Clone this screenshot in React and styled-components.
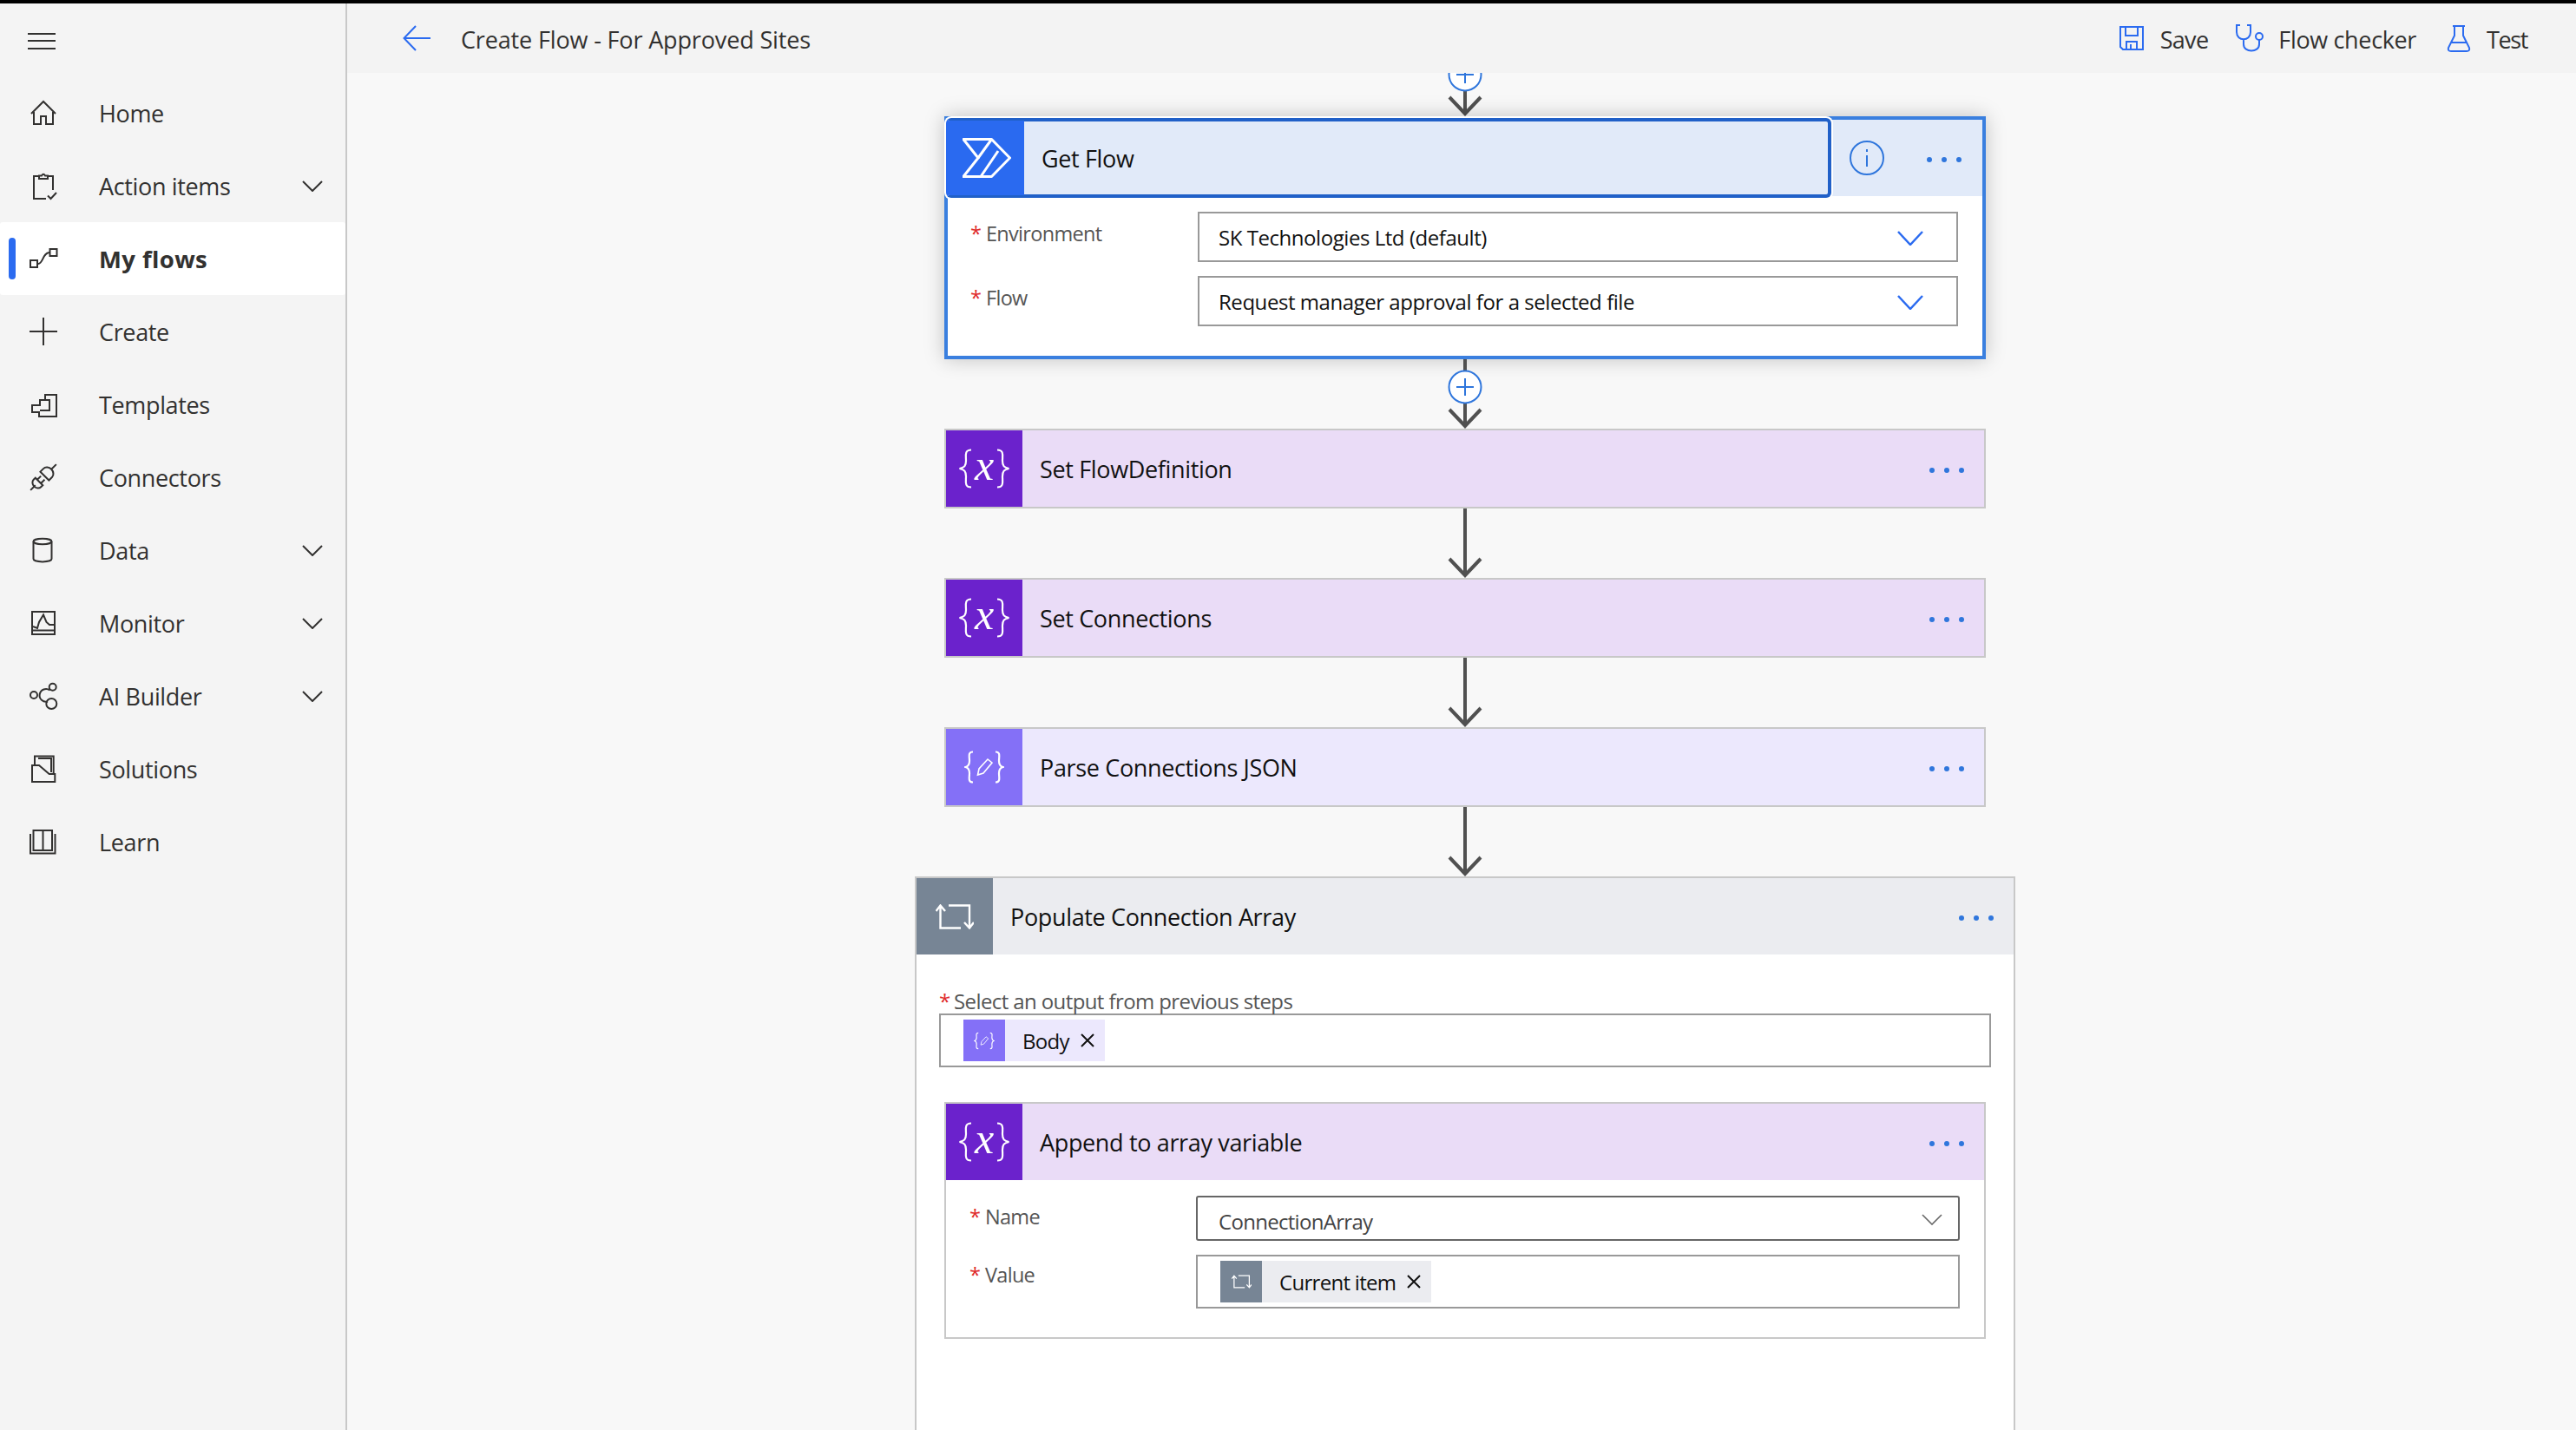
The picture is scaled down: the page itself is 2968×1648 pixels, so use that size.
import React from 'react';
import styled, { createGlobalStyle } from 'styled-components';

const Global = createGlobalStyle`
  html, body { margin: 0; padding: 0; height: 100%; overflow: hidden; }
  body { font-family: "Open Sans", "Noto Sans", sans-serif; color: #323130; }
  * { box-sizing: border-box; }
`;

const Shell = styled.div`
  display: grid;
  grid-template-columns: 400px 1fr;
  height: 1648px;
  border-top: 4px solid #000;
  background: #f8f8f8;
  overflow: hidden;
`;

const Sidebar = styled.nav`
  background: #f4f4f4;
  border-right: 2px solid #c8c8c8;
`;

const Burger = styled.div`
  height: 84px;
  padding: 34px 0 0 32px;
`;

const NavItem = styled.div`
  position: relative;
  display: flex;
  align-items: center;
  height: 84px;
  padding: 0 26px 0 34px;
  border-radius: 3px;
  background: ${p => (p.$active ? '#fff' : 'transparent')};
  font-size: ${p => (p.$active ? 27.5 : 27)}px;
  letter-spacing: ${p => (p.$active ? 0.4 : -0.35)}px;
  font-weight: ${p => (p.$active ? 700 : 400)};
  color: #323130;
`;

const ActiveBar = styled.span`
  position: absolute;
  left: 10px;
  top: 18px;
  width: 8px;
  height: 48px;
  border-radius: 4px;
  background: #2b6bf0;
`;

const NavLabel = styled.span`
  flex: 1;
  margin-left: 48px;
`;

const Main = styled.main`
  display: flex;
  flex-direction: column;
  min-width: 0;
  overflow: hidden;
`;

const Header = styled.header`
  flex: none;
  display: flex;
  align-items: center;
  height: 80px;
  padding: 0 56px 0 64px;
  background: #f3f3f3;
  font-size: 27px;
  z-index: 1;
`;

const Title = styled.div`
  flex: 1;
  margin: 3px 0 0 35px;
  letter-spacing: -0.15px;
`;

const Command = styled.div`
  display: flex;
  align-items: center;
  gap: ${p => p.$gap}px;
  margin-left: ${p => p.$left}px;
`;

const CommandLabel = styled.span`
  margin-top: 2px;
  letter-spacing: ${p => p.$spacing}px;
`;

const Canvas = styled.div`
  flex: 1;
  display: flex;
  flex-direction: column;
  align-items: center;
  padding-left: 8px;
  margin-top: -30px;
  overflow: hidden;
  clip-path: inset(30px 0 0 0);
`;

const StepCard = styled.section`
  flex: none;
  width: 1200px;
  background: #fff;
  border: ${p => (p.$selected ? '4px solid #3a7fdf' : '2px solid #c8c8c8')};
  box-shadow: ${p => (p.$selected ? '0 0 22px rgba(0,0,0,.22)' : 'none')};
`;

const LoopCard = styled.section`
  flex: none;
  width: 1268px;
  padding-bottom: 300px;
  background: #fff;
  border: 2px solid #c8c8c8;
`;

const StepHead = styled.div`
  display: flex;
  align-items: center;
  height: 88px;
  background: ${p => p.$tint};
  font-size: 27px;
  letter-spacing: -0.35px;
  color: #111;
`;

const IconTile = styled.div`
  flex: none;
  display: flex;
  align-items: center;
  justify-content: center;
  width: ${p => p.$size || 88}px;
  height: ${p => p.$size || 88}px;
  background: ${p => p.$color};
  color: #fff;
`;

const StepTitle = styled.div`
  flex: 1;
  margin-left: 20px;
`;

const Dots = styled.div`
  flex: none;
  display: flex;
  gap: 11px;
  margin: 3px ${p => p.$right}px 0 0;
`;

const Dot = styled.i`
  width: 6px;
  height: 6px;
  border-radius: 50%;
  background: #2f76dc;
`;

const FocusBox = styled.div`
  flex: none;
  display: flex;
  align-items: center;
  width: 1020px;
  height: 92px;
  margin: -2px 0 -2px -2px;
  border: 4px solid #2060c8;
  border-left-color: #2a6af0;
  border-radius: 6px;
  box-shadow: 0 0 0 2px #fff;
  background: #e1eaf9;
`;

const Fields = styled.div`
  display: grid;
  grid-template-columns: ${p => p.$label}px 1fr;
  row-gap: 16px;
  padding: 18px 28px ${p => p.$bottom}px ${p => p.$left}px;
`;

const FieldLabel = styled.div`
  display: flex;
  padding-top: ${p => p.$top || 8}px;
  line-height: 34px;
  font-size: 23.5px;
  letter-spacing: -0.7px;
  color: #555;
`;

const Star = styled.span`
  width: 18px;
  color: #e02b2b;
`;

const Select = styled.div`
  display: flex;
  align-items: center;
  justify-content: space-between;
  height: ${p => p.$height}px;
  padding: ${p => (p.$dark ? 6 : 0)}px ${p => p.$right}px 0 ${p => (p.$dark ? 24 : 22)}px;
  border: 2px solid ${p => (p.$dark ? '#666' : '#999')};
  border-radius: ${p => (p.$dark ? 3 : 0)}px;
  background: #fff;
  font-size: 24px;
  letter-spacing: ${p => (p.$dark ? -0.7 : -0.45)}px;
  color: ${p => (p.$dark ? '#444' : '#111')};
  svg { margin-top: ${p => (p.$dark ? -3 : 3)}px; }
`;

const TokenInput = styled.div`
  display: flex;
  align-items: center;
  height: 62px;
  padding-left: 26px;
  border: 2px solid #999;
  background: #fff;
`;

const Token = styled.div`
  display: flex;
  align-items: center;
  height: 48px;
  background: ${p => p.$tint};
  font-size: 24px;
  letter-spacing: -0.7px;
  color: #111;
`;

const TokenText = styled.span`
  margin: 0 13px 0 20px;
`;

const TokenClose = styled.svg`
  margin-right: 12px;
`;

const LoopBody = styled.div`
  padding: 40px 26px 40px;
`;

const LoopLabel = styled.div`
  display: flex;
  line-height: 28px;
  font-size: 24px;
  letter-spacing: -0.6px;
  color: #555;
`;

const LoopStar = styled(Star)`
  width: 17px;
`;

const Nested = styled.div`
  display: flex;
  justify-content: center;
`;

const InfoBtn = styled.svg`
  margin-left: 21px;
  margin-right: 49px;
`;

const VarMark = styled.span`
  margin: -8px 3px 0;
  font: italic 400 50px/60px "Liberation Serif", serif;
  color: #fff;
`;

const line = { fill: 'none', stroke: 'currentColor', strokeWidth: 2 };

const navIcons = {
  home: <><path d="M2 17L16 3L30 17" /><path d="M5 15V29H13V20H19V29H27V15" /></>,
  action: <><path d="M27 21V5H21M11 5H5V31H19" /><path d="M11 8V4.5H14Q16 1 18 4.5H21V8H11Z" /><path d="M21 27.5L24.5 31L31 24" /></>,
  flows: <><rect x="1" y="18" width="8" height="8" /><rect x="23.5" y="5" width="8" height="8" /><path d="M10 22C16 22 15 9 23 9" /></>,
  create: <path d="M16 0V32M0 16H32" />,
  templates: <path d="M18 11V5H31V30H11V25H3V17H12V11H23V23H12" />,
  connectors: (
    <g transform="rotate(-45 16 16)">
      <path d="M-5 16H3M9 10H6a5 6 0 0 0 0 12H9ZM9 13H15M9 19H15M18 9H23a6 7 0 0 1 0 14H18ZM29 16H37" />
    </g>
  ),
  data: <><ellipse cx="15" cy="6" rx="10.5" ry="3.2" /><path d="M4.5 6V26c0 4.5 21 4.5 21 0V6" /></>,
  monitor: <><rect x="3" y="3" width="26" height="26" /><path d="M3 24.5H29M4 20L9 22L11 15L16 6.5L19.5 15L23 18H29" /></>,
  ai: <><circle cx="5" cy="15" r="4" /><circle cx="26.7" cy="5.7" r="4" /><circle cx="25.3" cy="25" r="6" /><path d="M23.5 9.5A7.4 7.4 0 1 0 21 22.5" /></>,
  solutions: <><path d="M3 12H11L22.7 22H29.3V31H3Z" /><path d="M6 12V1.5H27.7V22M10 4H25V20" /></>,
  learn: <><path d="M1 7V29.5H29.5V7" /><path d="M4.5 26V3H15.5V26H4.5ZM15.5 3H26V26H15.5" /></>,
};

const NavIcon = ({ name }) => (
  <svg width="32" height="32" viewBox="0 0 32 32" {...line} style={{ flex: 'none', overflow: 'visible' }}>{navIcons[name]}</svg>
);

const Chevron = ({ color = '#323130', w = 24, h = 13, sw = 2 }) => (
  <svg width={w} height={h} viewBox={`0 0 ${w} ${h}`} fill="none" stroke={color} strokeWidth={sw}>
    <path d={`M1 1L${w / 2} ${h - 1}L${w - 1} 1`} />
  </svg>
);

const ThreeDots = ({ right }) => (
  <Dots $right={right}><Dot /><Dot /><Dot /></Dots>
);

// the little arrow between two steps, optionally with the insert button
const Arrow = ({ plus }) => (
  <svg width="40" height="80" viewBox="0 0 40 80" fill="none" style={{ flex: 'none' }}>
    <path d="M20 0V78M2 58L20 77L38 58" stroke="#505050" strokeWidth="4" />
    {plus && (
      <g>
        <circle cx="20" cy="32" r="18.5" fill="#fff" stroke="#2f76dc" strokeWidth="2" />
        <path d="M20 22V42M10 32H30" stroke="#2f76dc" strokeWidth="2" />
      </g>
    )}
  </svg>
);

const PowerLogo = () => (
  <svg width="56" height="46" viewBox="0 0 56 46" fill="none" stroke="#fff" strokeWidth="3" strokeLinejoin="round">
    <path d="M1 1.5H33.5L54.5 23L33.5 44.5H1L18 23Z" />
    <path d="M33.5 1.5L18 23M41 15L21 44.5" />
  </svg>
);

const LoopIcon = ({ w = 44, h = 29 }) => (
  <svg width={w} height={h} viewBox="0 0 44 29" fill="none" stroke="#fff" strokeWidth="2.4">
    <path d="M0.5 8L5.5 1.5L11 8M5.5 2V27.5H29M15 1.5H39V27M33 21L39 27.5L44 21" />
  </svg>
);

const JsonIcon = ({ w = 46, h = 38 }) => (
  <svg width={w} height={h} viewBox="0 0 46 38" fill="none" stroke="#fff" strokeWidth="2.2">
    <path d="M10 1.5C4 1.5 6 7 6 12C6 16 5 18 1.5 19C5 20 6 22 6 26C6 31 4 36.5 10 36.5M36 1.5C42 1.5 40 7 40 12C40 16 41 18 44.5 19C41 20 40 22 40 26C40 31 42 36.5 36 36.5" />
    <path d="M15.5 28L17 21L27 10L32 14L22 26Z" strokeWidth="1.6" />
  </svg>
);

const CloseX = () => (
  <TokenClose width="16" height="16" viewBox="0 0 16 16" stroke="#111" strokeWidth="2">
    <path d="M1 1L15 15M15 1L1 15" />
  </TokenClose>
);

const Brace = ({ flip }) => (
  <svg width="16" height="46" viewBox="0 0 16 46" fill="none" stroke="#fff" strokeWidth="2.2">
    <path d={flip
      ? 'M1 1.5C9 1.5 7 8 7 14C7 20 9 22 14.5 23C9 24 7 26 7 32C7 38 9 44.5 1 44.5'
      : 'M15 1.5C7 1.5 9 8 9 14C9 20 7 22 1.5 23C7 24 9 26 9 32C9 38 7 44.5 15 44.5'}
    />
  </svg>
);

const Variable = () => (
  <><Brace /><VarMark>x</VarMark><Brace flip /></>
);

const nav = [
  ['home', 'Home'],
  ['action', 'Action items', true],
  ['flows', 'My flows', false, true],
  ['create', 'Create'],
  ['templates', 'Templates'],
  ['connectors', 'Connectors'],
  ['data', 'Data', true],
  ['monitor', 'Monitor', true],
  ['ai', 'AI Builder', true],
  ['solutions', 'Solutions'],
  ['learn', 'Learn'],
];

const PURPLE = { tile: '#6b22cc', tint: '#eadcf7' };
const VIOLET = { tile: '#8470f7', tint: '#ece8fd' };
const SLATE = { tile: '#778595', tint: '#ebecf0' };

const Field = ({ label, top }) => (
  <FieldLabel $top={top}><Star>*</Star>{label}</FieldLabel>
);

const SimpleStep = ({ theme, icon, title }) => (
  <StepCard>
    <StepHead $tint={theme.tint}>
      <IconTile $color={theme.tile}>{icon}</IconTile>
      <StepTitle>{title}</StepTitle>
      <ThreeDots right={23} />
    </StepHead>
  </StepCard>
);

const App = () => (
  <>
    <Global />
    <Shell>
      <Sidebar>
        <Burger>
          <svg width="32" height="20" viewBox="0 0 32 20" stroke="#323130" strokeWidth="2">
            <path d="M0 1H32M0 9H32M0 18H32" />
          </svg>
        </Burger>
        {nav.map(([icon, label, more, active]) => (
          <NavItem key={label} $active={active}>
            {active && <ActiveBar />}
            <NavIcon name={icon} />
            <NavLabel>{label}</NavLabel>
            {more && <Chevron />}
          </NavItem>
        ))}
      </Sidebar>
      <Main>
        <Header>
          <svg width="32" height="30" viewBox="0 0 32 30" fill="none" stroke="#2b6bf0" strokeWidth="2">
            <path d="M15 1L1.5 15L15 29M2 15H32" />
          </svg>
          <Title>Create Flow - For Approved Sites</Title>
          <Command $gap={19} $left={0}>
            <svg width="28" height="28" viewBox="0 0 28 28" fill="none" stroke="#2b6bf0" strokeWidth="2">
              <path d="M1 1H27V27H4L1 24ZM7 1V11H21V1M8 27V18H20V27M13 21V27" />
            </svg>
            <CommandLabel $spacing={-0.7}>Save</CommandLabel>
          </Command>
          <Command $gap={17} $left={32}>
            <svg width="32" height="32" viewBox="0 0 32 32" fill="none" stroke="#2b6bf0" strokeWidth="2">
              <path d="M5 1H1V9C1 20 17 20 17 9V1H13M9 17V23C9 33 27 33 27 23V18" />
              <circle cx="27" cy="14" r="4" />
            </svg>
            <CommandLabel $spacing={-0.35}>Flow checker</CommandLabel>
          </Command>
          <Command $gap={18} $left={35}>
            <svg width="28" height="32" viewBox="0 0 28 32" fill="none" stroke="#2b6bf0" strokeWidth="2">
              <path d="M7 2H21M9 2V13L2 27Q1 31 5 31H23Q27 31 26 27L19 13V2M5 21H23" />
            </svg>
            <CommandLabel $spacing={-1.4}>Test</CommandLabel>
          </Command>
        </Header>
        <Canvas>
          <Arrow plus />
          <StepCard $selected>
            <StepHead $tint="#e1eaf9">
              <FocusBox>
                <IconTile $color="#2a6af0" $size={86}><PowerLogo /></IconTile>
                <StepTitle>Get Flow</StepTitle>
              </FocusBox>
              <InfoBtn width="40" height="40" viewBox="0 0 40 40" fill="none" stroke="#2f76dc" strokeWidth="2">
                <circle cx="20" cy="20" r="19" />
                <path d="M20 17V30M20 10V13" />
              </InfoBtn>
              <ThreeDots right={24} />
            </StepHead>
            <Fields $label={262} $left={26} $bottom={34}>
              <Field label="Environment" />
              <Select $height={58} $right={38}>SK Technologies Ltd (default)<Chevron color="#2b6bf0" w={30} h={17} sw={2.5} /></Select>
              <Field label="Flow" />
              <Select $height={58} $right={38}>Request manager approval for a selected file<Chevron color="#2b6bf0" w={30} h={17} sw={2.5} /></Select>
            </Fields>
          </StepCard>
          <Arrow plus />
          <SimpleStep theme={PURPLE} icon={<Variable />} title="Set FlowDefinition" />
          <Arrow />
          <SimpleStep theme={PURPLE} icon={<Variable />} title="Set Connections" />
          <Arrow />
          <SimpleStep theme={VIOLET} icon={<JsonIcon />} title="Parse Connections JSON" />
          <Arrow />
          <LoopCard>
            <StepHead $tint={SLATE.tint}>
              <IconTile $color={SLATE.tile}><LoopIcon /></IconTile>
              <StepTitle>Populate Connection Array</StepTitle>
              <ThreeDots right={23} />
            </StepHead>
            <LoopBody>
              <LoopLabel><LoopStar>*</LoopStar>Select an output from previous steps</LoopLabel>
              <TokenInput>
                <Token $tint={VIOLET.tint}>
                  <IconTile $color={VIOLET.tile} $size={48}><JsonIcon w={24} h={21} /></IconTile>
                  <TokenText>Body</TokenText>
                  <CloseX />
                </Token>
              </TokenInput>
            </LoopBody>
            <Nested>
              <StepCard>
                <StepHead $tint={PURPLE.tint}>
                  <IconTile $color={PURPLE.tile}><Variable /></IconTile>
                  <StepTitle>Append to array variable</StepTitle>
                  <ThreeDots right={23} />
                </StepHead>
                <Fields $label={261} $left={27} $bottom={33}>
                  <Field label="Name" top={7} />
                  <Select $height={52} $right={18} $dark>ConnectionArray<Chevron color="#666" sw={1.6} /></Select>
                  <Field label="Value" top={6} />
                  <TokenInput>
                    <Token $tint={SLATE.tint}>
                      <IconTile $color={SLATE.tile} $size={48}><LoopIcon w={23} h={16} /></IconTile>
                      <TokenText>Current item</TokenText>
                      <CloseX />
                    </Token>
                  </TokenInput>
                </Fields>
              </StepCard>
            </Nested>
          </LoopCard>
        </Canvas>
      </Main>
    </Shell>
  </>
);

export default App;
